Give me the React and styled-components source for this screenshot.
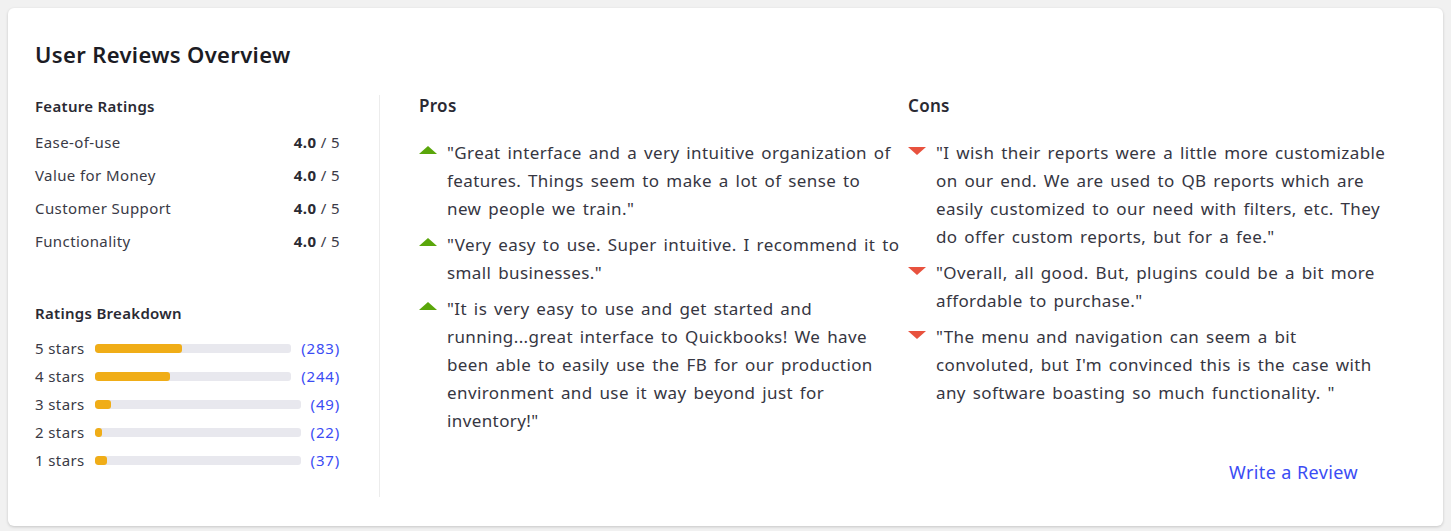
import React from 'react'
import styled, { createGlobalStyle } from 'styled-components'

const GlobalStyle = createGlobalStyle`
  body {
    margin: 0;
    background-color: #f1f1f1;
    font-family: "Noto Sans", "Open Sans", sans-serif;
    color: #333340;
  }
`

const Card = styled.div`
  margin: 8px;
  background: #fff;
  border-radius: 6px;
  box-shadow: 0 1px 3px rgba(0, 0, 0, 0.18);
  padding: 31px 27px 29px;
  height: 518px;
  box-sizing: border-box;
  display: flex;
  flex-direction: column;
`

const Title = styled.h1`
  margin: 0 0 26px;
  font-size: 22px;
  font-weight: 600;
  letter-spacing: 0.35px;
  color: #1c1c24;
  line-height: 30px;
`

const Columns = styled.div`
  flex: 1;
  display: flex;
`

const Sidebar = styled.div`
  width: 305px;
  padding-right: 39px;
  border-right: 1px solid #ececec;
  padding-bottom: 22px;
`

const SectionTitle = styled.h3`
  margin: 0;
  font-size: ${p => p.$size || 15}px;
  font-weight: 600;
  letter-spacing: 0.3px;
  color: #2a2a33;
  line-height: 22px;
`

const RatingList = styled.div`
  margin-top: 9px;
  margin-bottom: 44px;
`

const RatingRow = styled.div`
  display: flex;
  justify-content: space-between;
  font-size: 15px;
  letter-spacing: 0.4px;
  line-height: 33px;
  color: #3a3a46;
`

const Score = styled.span`
  b {
    font-weight: 700;
    color: #2a2a33;
  }
`

const BreakdownList = styled.div`
  margin-top: 10px;
`

const BarRow = styled.div`
  display: flex;
  align-items: center;
  height: 28px;
  font-size: 15px;
  letter-spacing: 0.4px;
  color: #3a3a46;
`

const StarLabel = styled.span`
  width: 60px;
`

const Track = styled.div`
  flex: 1;
  height: 9px;
  border-radius: 3px;
  background: #e8e8ee;
  margin-right: 10px;
  overflow: hidden;
`

const Fill = styled.div`
  height: 100%;
  background: #f0ad17;
  border-radius: 3px;
`

const Count = styled.span`
  color: #3b4cf4;
  letter-spacing: 0.8px;
`

const Main = styled.div`
  flex: 1;
  display: flex;
  flex-direction: column;
  padding-left: 39px;
`

const ProsCons = styled.div`
  display: flex;
`

const Column = styled.div`
  width: 489px;
  padding-right: 8.2px;
  box-sizing: border-box;
`

const List = styled.ul`
  list-style: none;
  margin: 22px 0 0;
  padding: 0;
`

const Item = styled.li`
  display: flex;
  font-size: 17px;
  letter-spacing: 0.4px;
  word-spacing: 2px;
  line-height: 28px;
  color: #363642;
  margin-bottom: 8px;
`

const Arrow = styled.span`
  flex: none;
  width: 0;
  height: 0;
  margin-top: ${p => (p.$up ? '7px' : '8px')};
  margin-right: 10px;
  border-left: 9px solid transparent;
  border-right: 9px solid transparent;
  ${p =>
    p.$up
      ? 'border-bottom: 8px solid #5aa60a;'
      : 'border-top: 8px solid #e8523e;'}
`

const Footer = styled.div`
  display: flex;
  justify-content: flex-end;
  margin-top: auto;
  padding-right: 58px;
  padding-bottom: 13px;
`

const ReviewLink = styled.a`
  color: #3b4cf4;
  font-size: 18px;
  letter-spacing: 0.4px;
  line-height: 24px;
  text-decoration: none;
  cursor: pointer;
`

const features = [
  ['Ease-of-use', '4.0'],
  ['Value for Money', '4.0'],
  ['Customer Support', '4.0'],
  ['Functionality', '4.0'],
]

const breakdown = [
  [5, 283],
  [4, 244],
  [3, 49],
  [2, 22],
  [1, 37],
]

const pros = [
  '"Great interface and a very intuitive organization of features. Things seem to make a lot of sense to new people we train."',
  '"Very easy to use. Super intuitive. I recommend it to small businesses."',
  '"It is very easy to use and get started and running...great interface to Quickbooks! We have been able to easily use the FB for our production environment and use it way beyond just for inventory!"',
]

const cons = [
  '"I wish their reports were a little more customizable on our end. We are used to QB reports which are easily customized to our need with filters, etc. They do offer custom reports, but for a fee."',
  '"Overall, all good. But, plugins could be a bit more affordable to purchase."',
  '"The menu and navigation can seem a bit convoluted, but I\'m convinced this is the case with any software boasting so much functionality. "',
]

const App = () => {
  const total = breakdown.reduce((sum, [, n]) => sum + n, 0)
  return (
    <>
      <GlobalStyle />
      <Card>
        <Title>User Reviews Overview</Title>
        <Columns>
          <Sidebar>
            <SectionTitle>Feature Ratings</SectionTitle>
            <RatingList>
              {features.map(([name, score]) => (
                <RatingRow key={name}>
                  <span>{name}</span>
                  <Score>
                    <b>{score}</b> / 5
                  </Score>
                </RatingRow>
              ))}
            </RatingList>
            <SectionTitle>Ratings Breakdown</SectionTitle>
            <BreakdownList>
              {breakdown.map(([stars, n]) => (
                <BarRow key={stars}>
                  <StarLabel>{stars} stars</StarLabel>
                  <Track>
                    <Fill style={{ width: `${(n / total) * 100}%` }} />
                  </Track>
                  <Count>({n})</Count>
                </BarRow>
              ))}
            </BreakdownList>
          </Sidebar>
          <Main>
            <ProsCons>
              <Column>
                <SectionTitle as="h2" $size={17}>Pros</SectionTitle>
                <List>
                  {pros.map(t => (
                    <Item key={t}>
                      <Arrow $up />
                      <span>{t}</span>
                    </Item>
                  ))}
                </List>
              </Column>
              <Column>
                <SectionTitle as="h2" $size={17}>Cons</SectionTitle>
                <List>
                  {cons.map(t => (
                    <Item key={t}>
                      <Arrow />
                      <span>{t}</span>
                    </Item>
                  ))}
                </List>
              </Column>
            </ProsCons>
            <Footer>
              <ReviewLink>Write a Review</ReviewLink>
            </Footer>
          </Main>
        </Columns>
      </Card>
    </>
  )
}

export default App
